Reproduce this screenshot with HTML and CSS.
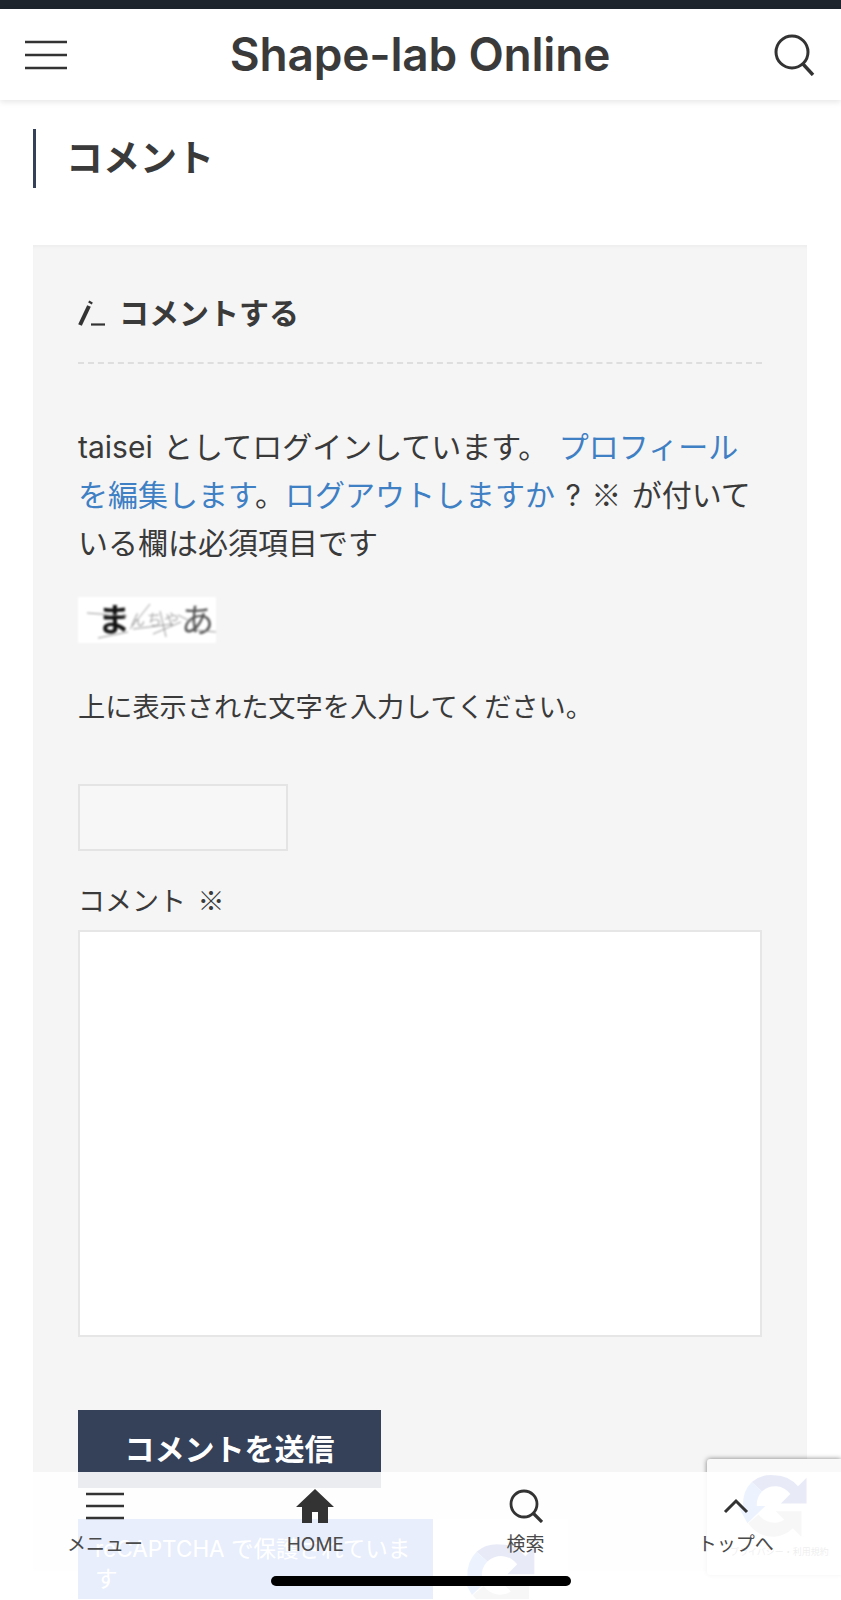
FILE: index.html
```html
<!DOCTYPE html>
<html lang="ja">
<head>
  <meta charset="UTF-8">
  <meta name="viewport" content="width=device-width, initial-scale=1.0">
  <title>コメント | Shape-lab Online</title>
  <link rel="stylesheet" href="styles.css">
</head>
<body>
  <div class="status-strip"></div>
  <header class="site-header">
    <svg class="header-icon" width="42" height="30" viewBox="0 0 42 30"><path d="M0 2h42M0 15h42M0 28h42" stroke="#333" stroke-width="2.6" fill="none"/></svg>
    <div class="site-title">Shape-lab Online</div>
    <svg class="header-icon" width="42" height="42" viewBox="0 0 42 42"><circle cx="19" cy="18" r="16" stroke="#333" stroke-width="3" fill="none"/><path d="M30 30l10 11" stroke="#333" stroke-width="3.400" fill="none"/></svg>
  </header>

  <main class="content">
    <h2 class="section-title">コメント</h2>
    <section class="comment-card">
      <h3 class="reply-title">
        <svg width="28" height="28" viewBox="0 0 28 28"><path d="M2 26L11 7" stroke="#333" stroke-width="4" fill="none"/><path d="M12 4.500l1-2" stroke="#333" stroke-width="4" fill="none"/><path d="M13 25.500h14" stroke="#333" stroke-width="2.200" fill="none"/></svg>
        コメントする
      </h3>
      <p class="logged-in">taisei としてログインしています。 <a href="#">プロフィールを編集します</a>。<a href="#">ログアウトしますか</a> ? <span class="required-mark">※</span> が付いている欄は必須項目です</p>
      <div class="captcha-image">
        <span class="captcha-ma">ま</span><span class="captcha-faint">ん</span><span class="captcha-faint">ち</span><span class="captcha-faint">や</span><span class="captcha-a">あ</span>
        <svg class="captcha-noise" width="138" height="46" viewBox="0 0 138 46"><path d="M9 16l40 3M20 41l30-6M52 32l20-25M55 32l40-5M75 37l28-12M82 14l6 26M100 18l20 10M118 33l20 2" stroke="#999" stroke-width="1" fill="none"/></svg>
      </div>
      <p class="captcha-note">上に表示された文字を入力してください。</p>
      <input class="captcha-input" type="text" aria-label="captcha">
      <label class="comment-label" for="comment">コメント <span class="required-mark">※</span></label>
      <textarea class="comment-box" id="comment"></textarea>
      <button class="submit-btn" type="button">コメントを送信</button>
      <div class="recaptcha-row">
        <div class="recaptcha-notice">reCAPTCHA で保護されています</div>
        <div class="recaptcha-logo-box">
          <svg width="76" height="76" viewBox="0 0 84 84"><path d="M42 6a36 36 0 0 1 28 13l10-10v30H50l11-11a22 22 0 0 0-33-3L16 14A36 36 0 0 1 42 6z" fill="#1c3aa9"/><path d="M6 42a36 36 0 0 1 10-28l12 11a22 22 0 0 0-6 17h10L11 62 0 42z" fill="#4285f4"/><path d="M42 78a36 36 0 0 1-30-16l12-10a22 22 0 0 0 30 6l-10-10h30v30l-10-10a36 36 0 0 1-22 10z" fill="#aaa"/></svg>
        </div>
      </div>
    </section>
  </main>

  <aside class="recaptcha-badge">
    <svg width="72" height="72" viewBox="0 0 84 84"><path d="M42 6a36 36 0 0 1 28 13l10-10v30H50l11-11a22 22 0 0 0-33-3L16 14A36 36 0 0 1 42 6z" fill="#1c3aa9"/><path d="M6 42a36 36 0 0 1 10-28l12 11a22 22 0 0 0-6 17h10L11 62 0 42z" fill="#4285f4"/><path d="M42 78a36 36 0 0 1-30-16l12-10a22 22 0 0 0 30 6l-10-10h30v30l-10-10a36 36 0 0 1-22 10z" fill="#aaa"/></svg>
    <div class="badge-links">プライバシー・利用規約</div>
  </aside>

  <nav class="footer-menu">
    <a class="footer-item" href="#">
      <svg width="38" height="34" viewBox="0 0 38 34"><path d="M0 5h38M0 17h38M0 29h38" stroke="#333" stroke-width="2.400" fill="none"/></svg>
      <span>メニュー</span>
    </a>
    <a class="footer-item" href="#">
      <svg width="38" height="34" viewBox="0 0 38 34"><path d="M19 0L38 18h-6v16H22V23h-6v11H6V18H0z" fill="#333"/></svg>
      <span>HOME</span>
    </a>
    <a class="footer-item" href="#">
      <svg width="34" height="34" viewBox="0 0 34 34"><circle cx="15" cy="15" r="13" stroke="#333" stroke-width="2.800" fill="none"/><path d="M24 24l9 9" stroke="#333" stroke-width="3.200" fill="none"/></svg>
      <span>検索</span>
    </a>
    <a class="footer-item" href="#">
      <svg width="26" height="34" viewBox="0 0 26 34"><path d="M2 23L13 12l11 11" stroke="#333" stroke-width="3" fill="none"/></svg>
      <span>トップへ</span>
    </a>
  </nav>
  <div class="home-indicator"></div>
</body>
</html>
```

FILE: styles.css
```css
html, body {
  margin: 0;
  height: 1600px;
  overflow: hidden;
}

body {
  font-family: Inter, "Noto Sans CJK JP", sans-serif;
  color: #3a3a3a;
  background-color: #fff;
  position: relative;
}

.status-strip {
  height: 9px;
  background-color: #1e252c;
}

.site-header {
  height: 91px;
  padding: 0 26px 0 25px;
  display: flex;
  align-items: center;
  justify-content: space-between;
  background-color: #fff;
  box-shadow: 0 2px 6px rgba(0, 0, 0, 0.1);
  position: relative;
}

.site-title {
  font-size: 46px;
  font-weight: 600;
  letter-spacing: -0.2px;
  color: #3a3a3a;
  line-height: 91px;
}

.content {
  padding: 29px 34px 0 33px;
}

.section-title {
  margin: 0 0 57px;
  height: 59px;
  padding-left: 30px;
  border-left: 3px solid #354059;
  font-size: 37px;
  font-weight: 700;
  line-height: 59px;
}

.comment-card {
  height: 1326px;
  padding: 45px;
  background-color: #f5f5f5;
  box-sizing: border-box;
  box-shadow: inset 0 3px 3px -1px rgba(0, 0, 0, 0.03);
}

.reply-title {
  margin: 0 0 59px;
  height: 72px;
  border-bottom: 2px dashed #dedede;
  display: flex;
  align-items: flex-start;
  gap: 13px;
  font-size: 30px;
  font-weight: 700;
  line-height: 46px;
}

.reply-title svg {
  margin-top: 9px;
}

.logged-in {
  margin: 0 0 30px;
  font-size: 30px;
  word-spacing: 2px;
  line-height: 48px;
}

.logged-in a {
  color: #3f7fc4;
  text-decoration: none;
}

.required-mark {
  font-family: "Noto Sans CJK JP", sans-serif;
  line-height: 1;
}

.captcha-image {
  width: 138px;
  height: 46px;
  background-color: #fff;
  display: flex;
  align-items: center;
  padding-left: 20px;
  box-sizing: border-box;
  position: relative;
  overflow: hidden;
  filter: blur(0.8px);
}

.captcha-ma {
  font-size: 32px;
  font-weight: 700;
  color: #111;
  line-height: 46px;
}

.captcha-faint {
  font-size: 15px;
  color: #aaa;
  line-height: 46px;
  width: 17px;
}

.captcha-a {
  font-size: 33px;
  color: #555;
  line-height: 46px;
}

.captcha-noise {
  position: absolute;
  left: 0;
  top: 0;
}

.captcha-note {
  margin: 41px 0 52px;
  font-size: 27.200px;
  line-height: 48px;
}

.captcha-input {
  display: block;
  width: 210px;
  height: 67px;
  box-sizing: border-box;
  border: 2px solid #e4e4e4;
  background-color: #f7f7f7;
}

.comment-label {
  display: block;
  margin-top: 27px;
  font-size: 27px;
  word-spacing: 4px;
  line-height: 48px;
}

.comment-box {
  display: block;
  width: 684px;
  height: 407px;
  margin: 4px 0 73px;
  box-sizing: border-box;
  border: 2px solid #e6e6e6;
  background-color: #fff;
  resize: none;
}

.submit-btn {
  display: block;
  width: 303px;
  height: 78px;
  padding: 0 0 5px;
  border: none;
  background-color: #354059;
  color: #fff;
  font-family: inherit;
  font-size: 30px;
  font-weight: 700;
}

.recaptcha-row {
  display: flex;
  margin-top: 31px;
  height: 80px;
  overflow: hidden;
}

.recaptcha-notice {
  width: 355px;
  box-sizing: border-box;
  padding: 15px 8px 15px 17px;
  background-color: #1a56d8;
  color: #fff;
  font-size: 22.500px;
  line-height: 30px;
}

.recaptcha-logo-box {
  width: 135px;
  background-color: #fff;
  padding: 20px 0 0 29px;
  box-sizing: border-box;
}

.recaptcha-badge {
  position: absolute;
  left: 707px;
  top: 1459px;
  width: 134px;
  height: 116px;
  overflow: hidden;
  background-color: #f9f9f9;
  border-radius: 3px 0 0 3px;
  box-shadow: 0 0 5px rgba(0, 0, 0, 0.5);
  padding: 11px 0 0 31px;
  box-sizing: border-box;
}

.recaptcha-badge svg {
  display: block;
}

.badge-links {
  font-size: 9px;
  line-height: 20px;
  color: #555;
  margin-left: -8px;
  white-space: nowrap;
}

.footer-menu {
  position: absolute;
  left: 0;
  right: 0;
  top: 1472px;
  height: 128px;
  display: grid;
  grid-template-columns: repeat(4, 1fr);
  align-items: start;
  background-color: rgba(255, 255, 255, 0.9);
}

.footer-item {
  padding-top: 17px;
  display: flex;
  flex-direction: column;
  align-items: center;
  color: #4a4a4a;
  text-decoration: none;
  font-size: 19px;
  line-height: 26px;
  gap: 9px;
}

.footer-item svg {
  flex-shrink: 0;
}

.home-indicator {
  position: absolute;
  left: 271px;
  top: 1576px;
  width: 300px;
  height: 10px;
  border-radius: 5px;
  background-color: #000;
}
```
